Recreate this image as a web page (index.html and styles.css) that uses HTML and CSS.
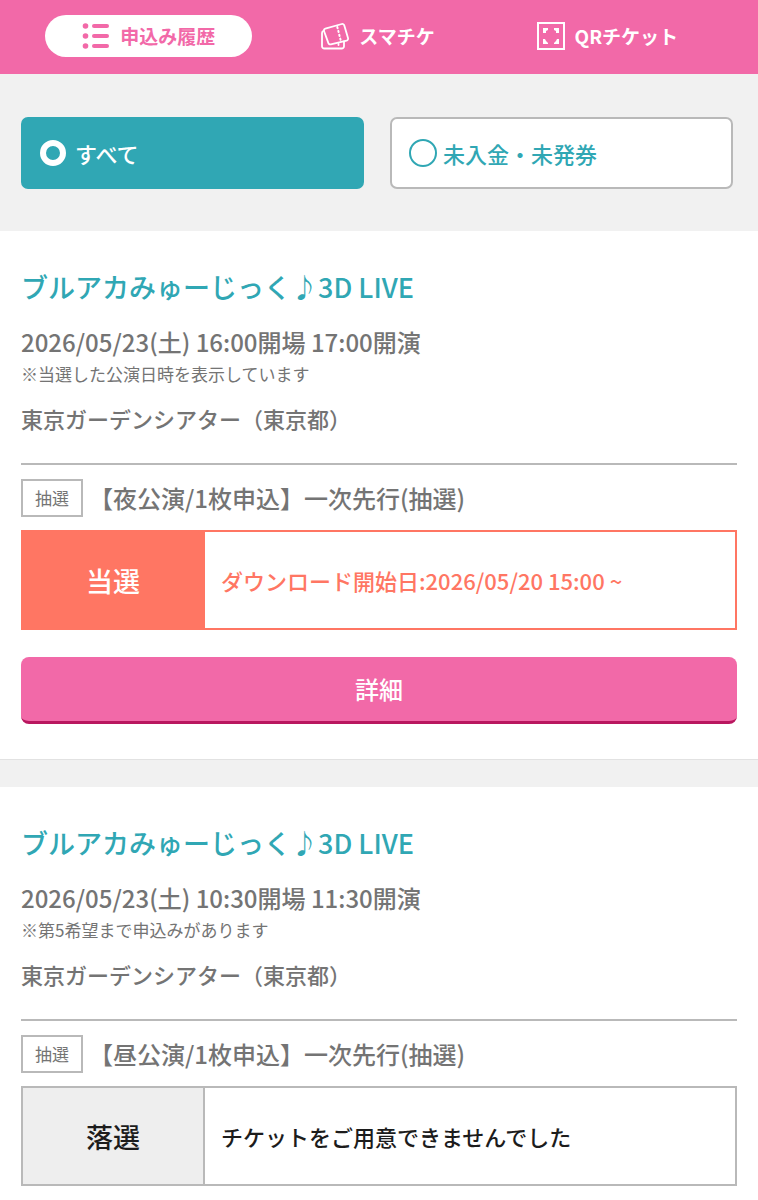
FILE: index.html
```html
<!DOCTYPE html>
<html lang="ja">
<head>
<meta charset="utf-8">
<meta name="viewport" content="width=device-width, initial-scale=1">
<title>申込み履歴</title>
<link rel="stylesheet" href="styles.css">
</head>
<body>
<header class="header">
  <nav class="tabs">
    <a class="tab tab-active" href="#history" aria-current="page">
      <svg class="tab-icon" viewBox="0 0 28 28" aria-hidden="true">
        <g fill="currentColor">
          <circle cx="3.5" cy="4" r="2.8"/><circle cx="3.5" cy="14" r="2.8"/><circle cx="3.5" cy="24" r="2.8"/>
          <rect x="10" y="2" width="17" height="4" rx="2"/><rect x="10" y="12" width="17" height="4" rx="2"/><rect x="10" y="22" width="17" height="4" rx="2"/>
        </g>
      </svg>
      <span>申込み履歴</span>
    </a>
    <a class="tab" href="#smart">
      <svg class="tab-icon" viewBox="0 0 28 28" aria-hidden="true">
        <g fill="none" stroke="currentColor" stroke-width="1.8" stroke-linejoin="round" stroke-linecap="round">
          <path d="M4.300 6.600 20.800 2a2 2 0 0 1 2.500 1.400L27 16.100a2 2 0 0 1-1.400 2.500L9.800 22.300a2 2 0 0 1-2.500-1.400L3 9a2 2 0 0 1 1.300-2.400Z"/>
          <path d="M2.900 8.500Q1 9 1 11v13.200a2.300 2.300 0 0 0 2.300 2.300h17.400a2.300 2.300 0 0 0 2.300-2.300v-4.700"/>
          <path d="M16.300 5 19.600 18" stroke-width="2" stroke-dasharray="1.200 2.800"/>
          <path d="M17.500 22v3" stroke-dasharray="1 2"/>
        </g>
      </svg>
      <span>スマチケ</span>
    </a>
    <a class="tab" href="#qr">
      <svg class="tab-icon" viewBox="0 0 28 28" aria-hidden="true">
        <rect x="1" y="1" width="26" height="26" fill="none" stroke="currentColor" stroke-width="2"/>
        <path fill="currentColor" d="M6 6h5v2l-2 1v2H6ZM22 6h-5v2l2 1v2h3ZM6 22h5v-1l-2-2-1-2H6ZM22 22h-5v-1l2-2 1-2h2Z"/>
      </svg>
      <span>QRチケット</span>
    </a>
  </nav>
</header>

<main>
  <form class="filters">
    <label class="filter"><input class="filter-radio" type="radio" name="filter" checked><span>すべて</span></label>
    <label class="filter"><input class="filter-radio" type="radio" name="filter"><span>未入金・未発券</span></label>
  </form>

  <article class="card">
    <h2 class="card-title">ブルアカみゅーじっく♪3D LIVE</h2>
    <p class="card-date">2026/05/23(土) 16:00開場 17:00開演</p>
    <p class="card-note">※当選した公演日時を表示しています</p>
    <p class="card-place">東京ガーデンシアター（東京都）</p>
    <div class="entry">
      <span class="badge">抽選</span>
      <span class="entry-name">【夜公演/1枚申込】一次先行(抽選)</span>
    </div>
    <div class="result result-won">
      <strong class="result-label">当選</strong>
      <p class="result-text">ダウンロード開始日:2026/05/20 15:00 ~</p>
    </div>
    <button class="detail" type="button">詳細</button>
  </article>

  <article class="card">
    <h2 class="card-title">ブルアカみゅーじっく♪3D LIVE</h2>
    <p class="card-date">2026/05/23(土) 10:30開場 11:30開演</p>
    <p class="card-note">※第5希望まで申込みがあります</p>
    <p class="card-place">東京ガーデンシアター（東京都）</p>
    <div class="entry">
      <span class="badge">抽選</span>
      <span class="entry-name">【昼公演/1枚申込】一次先行(抽選)</span>
    </div>
    <div class="result">
      <strong class="result-label">落選</strong>
      <p class="result-text">チケットをご用意できませんでした</p>
    </div>
  </article>
</main>
</body>
</html>
```

FILE: styles.css
```css
:root {
  --pink: #f269a8;
  --teal: #30a7b4;
  --coral: #ff7663;
  --gray: #747474;
  --line: #b9b9b9;
}

* {
  box-sizing: border-box;
}

body {
  margin: 0;
  background: #fff;
  color: var(--gray);
  font-family: "Noto Sans CJK JP", sans-serif;
  font-weight: 500;
}

h2,
p {
  margin: 0;
  font-weight: inherit;
}

.header {
  padding: 15px 36px 17px 34px;
  background: var(--pink);
}

.tabs {
  display: grid;
  grid-template-columns: repeat(3, 1fr);
}

.tab {
  display: flex;
  align-items: center;
  justify-content: center;
  gap: 10px;
  height: 42px;
  margin: 0 11px;
  border-radius: 21px;
  color: #fff;
  font-size: 19px;
  font-weight: 700;
  line-height: 28px;
  white-space: nowrap;
  text-decoration: none;
}

.tab-active {
  background: #fff;
  color: var(--pink);
}

.tab-icon {
  flex: none;
  width: 28px;
  height: 28px;
}

.filters {
  display: grid;
  grid-template-columns: 1fr 1fr;
  gap: 26px;
  padding: 43px 25px 42px 21px;
  background: #f1f1f1;
}

.filter {
  display: flex;
  align-items: center;
  gap: 6px;
  height: 72px;
  padding: 0 17px;
  border: 2px solid var(--line);
  border-radius: 7px;
  background: #fff;
  color: var(--teal);
  font-size: 22px;
}

.filter:has(:checked) {
  gap: 9px;
  border-color: var(--teal);
  background: var(--teal);
  color: #fff;
}

.filter-radio {
  appearance: none;
  width: 28px;
  height: 28px;
  margin: 0;
  border: 2px solid currentColor;
  border-radius: 50%;
  color: inherit;
}

.filter-radio:checked {
  width: 26px;
  height: 26px;
  border-width: 6px;
}

.card {
  padding: 36px 21px;
}

.card + .card {
  border-top: 27px solid #f1f1f1;
  box-shadow: 0 -1px 0 #e2e2e2;
}

.card-title {
  color: var(--teal);
  font-size: 27px;
  line-height: 40px;
}

.card-date {
  margin-top: 17px;
  font-size: 24px;
  line-height: 36px;
}

.card-note {
  font-size: 17px;
  font-weight: 400;
  line-height: 28px;
}

.card-place {
  margin-top: 14px;
  font-size: 22px;
  line-height: 32px;
}

.entry {
  display: flex;
  align-items: center;
  gap: 6px;
  margin-top: 29px;
  padding: 14px 0 13px;
  border-top: 2px solid var(--line);
}

.badge {
  flex: none;
  padding: 0 12px;
  border: 2px solid var(--line);
  font-size: 17px;
  font-weight: 400;
  line-height: 34px;
}

.entry-name {
  font-size: 24px;
  line-height: 36px;
}

.result {
  display: grid;
  grid-template-columns: 182px 1fr;
  border: 2px solid var(--line);
  color: #1c1c1c;
}

.result-won {
  border-color: var(--coral);
  color: var(--coral);
}

.result-label {
  padding: 29px 0 27px;
  border-right: 2px solid var(--line);
  background: #eee;
  font-size: 27px;
  font-weight: 500;
  line-height: 40px;
  text-align: center;
}

.result-won .result-label {
  border-color: var(--coral);
  background: var(--coral);
  color: #fff;
}

.result-text {
  align-self: center;
  padding: 0 16px;
  font-size: 22px;
  line-height: 32px;
}

.detail {
  display: block;
  width: 100%;
  height: 67px;
  margin-top: 27px;
  padding: 0 0 2px;
  border: 0;
  border-bottom: 3px solid #b9175f;
  border-radius: 8px;
  background: var(--pink);
  color: #fff;
  font: inherit;
  font-size: 24px;
}
```
